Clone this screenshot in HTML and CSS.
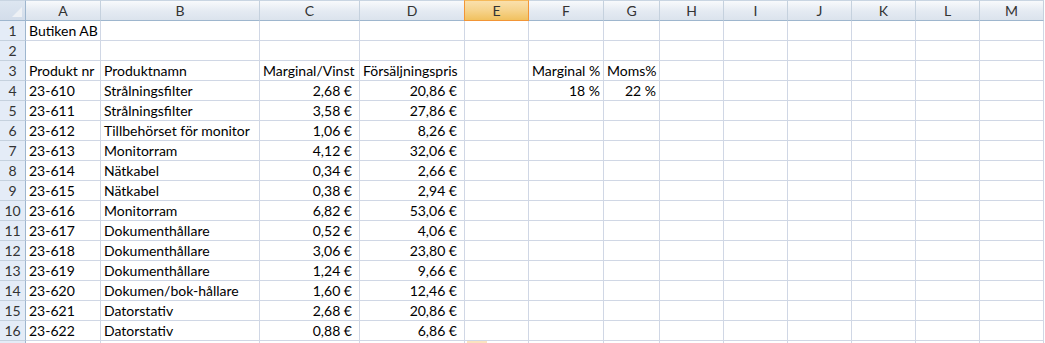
FILE: index.html
```html
<!DOCTYPE html>
<html lang="sv">
<head>
	<meta charset="UTF-8">
	<title>Butiken AB</title>
	<link rel="stylesheet" href="styles.css">
</head>
<body>
	<div class="sheet">
		<div class="row head">
			<div class="corner"><span class="tri"></span></div>
			<div class="col">A</div><div class="col">B</div><div class="col">C</div><div class="col">D</div>
			<div class="col sel">E</div><div class="col">F</div><div class="col">G</div><div class="col">H</div>
			<div class="col">I</div><div class="col">J</div><div class="col">K</div><div class="col">L</div><div class="col">M</div>
		</div>
		<div class="row">
			<div class="num">1</div><div class="c">Butiken AB</div><div class="c"></div><div class="c"></div><div class="c"></div>
			<div class="c"></div><div class="c"></div><div class="c"></div><div class="c"></div><div class="c"></div><div class="c"></div><div class="c"></div><div class="c"></div><div class="c"></div>
		</div>
		<div class="row">
			<div class="num">2</div><div class="c"></div><div class="c"></div><div class="c"></div><div class="c"></div>
			<div class="c"></div><div class="c"></div><div class="c"></div><div class="c"></div><div class="c"></div><div class="c"></div><div class="c"></div><div class="c"></div><div class="c"></div>
		</div>
		<div class="row">
			<div class="num">3</div><div class="c">Produkt nr</div><div class="c">Produktnamn</div><div class="c">Marginal/Vinst</div><div class="c">Försäljningspris</div>
			<div class="c"></div><div class="c">Marginal %</div><div class="c">Moms%</div><div class="c"></div><div class="c"></div><div class="c"></div><div class="c"></div><div class="c"></div><div class="c"></div>
		</div>
		<div class="row">
			<div class="num">4</div><div class="c">23-610</div><div class="c">Strålningsfilter</div><div class="c eur">2,68 €</div><div class="c eur">20,86 €</div>
			<div class="c"></div><div class="c pct">18 %</div><div class="c pct">22 %</div><div class="c"></div><div class="c"></div><div class="c"></div><div class="c"></div><div class="c"></div><div class="c"></div>
		</div>
		<div class="row">
			<div class="num">5</div><div class="c">23-611</div><div class="c">Strålningsfilter</div><div class="c eur">3,58 €</div><div class="c eur">27,86 €</div>
			<div class="c"></div><div class="c"></div><div class="c"></div><div class="c"></div><div class="c"></div><div class="c"></div><div class="c"></div><div class="c"></div><div class="c"></div>
		</div>
		<div class="row">
			<div class="num">6</div><div class="c">23-612</div><div class="c">Tillbehörset för monitor</div><div class="c eur">1,06 €</div><div class="c eur">8,26 €</div>
			<div class="c"></div><div class="c"></div><div class="c"></div><div class="c"></div><div class="c"></div><div class="c"></div><div class="c"></div><div class="c"></div><div class="c"></div>
		</div>
		<div class="row">
			<div class="num">7</div><div class="c">23-613</div><div class="c">Monitorram</div><div class="c eur">4,12 €</div><div class="c eur">32,06 €</div>
			<div class="c"></div><div class="c"></div><div class="c"></div><div class="c"></div><div class="c"></div><div class="c"></div><div class="c"></div><div class="c"></div><div class="c"></div>
		</div>
		<div class="row">
			<div class="num">8</div><div class="c">23-614</div><div class="c">Nätkabel</div><div class="c eur">0,34 €</div><div class="c eur">2,66 €</div>
			<div class="c"></div><div class="c"></div><div class="c"></div><div class="c"></div><div class="c"></div><div class="c"></div><div class="c"></div><div class="c"></div><div class="c"></div>
		</div>
		<div class="row">
			<div class="num">9</div><div class="c">23-615</div><div class="c">Nätkabel</div><div class="c eur">0,38 €</div><div class="c eur">2,94 €</div>
			<div class="c"></div><div class="c"></div><div class="c"></div><div class="c"></div><div class="c"></div><div class="c"></div><div class="c"></div><div class="c"></div><div class="c"></div>
		</div>
		<div class="row">
			<div class="num">10</div><div class="c">23-616</div><div class="c">Monitorram</div><div class="c eur">6,82 €</div><div class="c eur">53,06 €</div>
			<div class="c"></div><div class="c"></div><div class="c"></div><div class="c"></div><div class="c"></div><div class="c"></div><div class="c"></div><div class="c"></div><div class="c"></div>
		</div>
		<div class="row">
			<div class="num">11</div><div class="c">23-617</div><div class="c">Dokumenthållare</div><div class="c eur">0,52 €</div><div class="c eur">4,06 €</div>
			<div class="c"></div><div class="c"></div><div class="c"></div><div class="c"></div><div class="c"></div><div class="c"></div><div class="c"></div><div class="c"></div><div class="c"></div>
		</div>
		<div class="row">
			<div class="num">12</div><div class="c">23-618</div><div class="c">Dokumenthållare</div><div class="c eur">3,06 €</div><div class="c eur">23,80 €</div>
			<div class="c"></div><div class="c"></div><div class="c"></div><div class="c"></div><div class="c"></div><div class="c"></div><div class="c"></div><div class="c"></div><div class="c"></div>
		</div>
		<div class="row">
			<div class="num">13</div><div class="c">23-619</div><div class="c">Dokumenthållare</div><div class="c eur">1,24 €</div><div class="c eur">9,66 €</div>
			<div class="c"></div><div class="c"></div><div class="c"></div><div class="c"></div><div class="c"></div><div class="c"></div><div class="c"></div><div class="c"></div><div class="c"></div>
		</div>
		<div class="row">
			<div class="num">14</div><div class="c">23-620</div><div class="c">Dokumen/bok-hållare</div><div class="c eur">1,60 €</div><div class="c eur">12,46 €</div>
			<div class="c"></div><div class="c"></div><div class="c"></div><div class="c"></div><div class="c"></div><div class="c"></div><div class="c"></div><div class="c"></div><div class="c"></div>
		</div>
		<div class="row">
			<div class="num">15</div><div class="c">23-621</div><div class="c">Datorstativ</div><div class="c eur">2,68 €</div><div class="c eur">20,86 €</div>
			<div class="c"></div><div class="c"></div><div class="c"></div><div class="c"></div><div class="c"></div><div class="c"></div><div class="c"></div><div class="c"></div><div class="c"></div>
		</div>
		<div class="row">
			<div class="num">16</div><div class="c">23-622</div><div class="c">Datorstativ</div><div class="c eur">0,88 €</div><div class="c eur">6,86 €</div>
			<div class="c"></div><div class="c"></div><div class="c"></div><div class="c"></div><div class="c"></div><div class="c"></div><div class="c"></div><div class="c"></div><div class="c"></div>
		</div>
		<div class="row">
			<div class="num"></div><div class="c"></div><div class="c"></div><div class="c"></div><div class="c"></div>
			<div class="c"><span class="cursor"></span></div><div class="c"></div><div class="c"></div><div class="c"></div><div class="c"></div><div class="c"></div><div class="c"></div><div class="c"></div><div class="c"></div>
		</div>
	</div>
</body>
</html>
```
FILE: styles.css
```css
*{
	margin: 0;
	padding: 0;
	box-sizing: border-box;
}
html,body{
	height: 100%;
	overflow: hidden;
	background: #fff;
}
.sheet{
	font-family: Lato, "Liberation Sans", sans-serif;
	font-size: 14px;
	color: #000;
}
.row{
	display: grid;
	grid-template-columns: 26px 75px 159px 100px 105px 64px 75px 56px repeat(6,64px);
	height: 20px;
}
.row.head{height: 21px;}
.c,.num,.col,.corner{
	border-right: 1px solid #d0d7e5;
	border-bottom: 1px solid #d0d7e5;
	line-height: 19px;
	white-space: nowrap;
	position: relative;
}
.c{padding: 0 3px;}
.c.eur{text-align: right;padding-right: 7px;}
.c.pct{text-align: right;padding-right: 3px;}

/* column / row headings */
.col{
	background: linear-gradient(#f8fafc,#e4eaf2 55%,#dbe3ed);
	border-right-color: #c5d1de;
	border-bottom-color: #9eb6ce;
	border-top: 1px solid #c9d5e2;
	text-align: center;
	line-height: 19px;
	color: #333;
}
.col.sel{
	background: linear-gradient(#fae0ac,#f6d38c 50%,#f1c15f);
	border: 1px solid #f29536;
	border-top-color: #f5b95a;
	margin-left: -1px;
}
.corner{
	background: linear-gradient(#dde6f1,#d3ddea);
	border-right-color: #9eb6ce;
	border-bottom-color: #9eb6ce;
	border-top: 1px solid #c9d5e2;
}
.tri{
	position: absolute;
	right: 3px;
	bottom: 3px;
	width: 0;
	height: 0;
	border-left: 10px solid transparent;
	border-bottom: 10px solid #eef1f5;
}
.num{
	background: #e4ecf7;
	border-right-color: #9eb6ce;
	border-bottom-color: #c5d1de;
	text-align: center;
	color: #333;
}
.cursor{
	position: absolute;
	left: 2px;
	top: 0;
	width: 20px;
	height: 2px;
	background: #fbe3bf;
}
```
